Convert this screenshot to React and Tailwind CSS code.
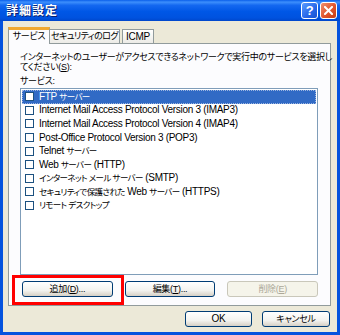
import React from "react";

const jp = { fontFamily: '"Liberation Sans", "Noto Sans CJK JP", sans-serif', fontFeatureSettings: '"palt"' };

const items = [
  "FTP サーバー",
  "Internet Mail Access Protocol Version 3 (IMAP3)",
  "Internet Mail Access Protocol Version 4 (IMAP4)",
  "Post-Office Protocol Version 3 (POP3)",
  "Telnet サーバー",
  "Web サーバー (HTTP)",
  "インターネット メール サーバー (SMTP)",
  "セキュリティで保護された Web サーバー (HTTPS)",
  "リモート デスクトップ",
];

function Mixed({ text }) {
  return text
    .split(/([\x20-\x7E]+)/)
    .map((s, i) =>
      /[\x21-\x7E]/.test(s) ? (
        <span key={i} className="text-[10px] tracking-[-0.3px]">{s}</span>
      ) : (
        <span key={i} className="text-[8.5px] tracking-[-0.6px]">{s}</span>
      )
    );
}

function Btn({ children, disabled, className = "" }) {
  return (
    <div
      className={
        "flex items-center justify-center h-[16px] rounded-[3px] border text-[9px] leading-none whitespace-nowrap " +
        (disabled
          ? "border-[#C9C7BA] text-[#ACA899] bg-[#F5F4EA] "
          : "border-[#003C74] text-black bg-[linear-gradient(to_bottom,#FFFFFF,#F3F3EF_60%,#D6D0C5)] ") +
        className
      }
    >
      {children}
    </div>
  );
}

export default function App() {
  return (
    <div className="w-[340px] h-[335px] bg-[#0553DE] flex flex-col overflow-hidden tracking-[-0.3px]" style={jp}>
      {/* title bar */}
      <div className="h-[21px] shrink-0 flex items-center pl-[6px] pr-[3px] bg-[linear-gradient(to_bottom,#0A5FEA_0%,#3D8FFC_10%,#1468F0_25%,#0057E6_55%,#0052DF_85%,#0047CB_100%)]">
        <span className="text-white font-bold text-[12px] tracking-[1px] [text-shadow:1px_1px_0_#0A1E6E]">詳細設定</span>
        <div className="ml-auto flex gap-[2px] items-center">
          <div className="w-[17px] h-[17px] rounded-[3px] border border-white bg-[linear-gradient(135deg,#5A9BFF,#2667E8_60%,#1B52D0)] flex items-center justify-center text-white font-bold text-[13px] leading-none" style={{ fontFamily: '"Liberation Sans", sans-serif' }}>?</div>
          <div className="w-[17px] h-[17px] rounded-[3px] border border-white bg-[linear-gradient(135deg,#F09070,#E0552D_55%,#C43D15)] flex items-center justify-center">
            <svg width="9" height="9" viewBox="0 0 9 9"><path d="M1 1 L8 8 M8 1 L1 8" stroke="white" strokeWidth="2" strokeLinecap="square" /></svg>
          </div>
        </div>
      </div>
      {/* body */}
      <div className="flex-1 mx-[3px] mb-[3px] bg-[#ECE9D8] flex flex-col px-[5px] pt-[5px] relative">
        {/* tabs */}
        <div className="h-[17px] flex items-end text-[9px] leading-none whitespace-nowrap">
          <div className="relative h-[17px] w-[42px] bg-[#FCFCFE] border-x border-[#919B9C] border-t-[3px] border-t-[#F0A830] flex items-center justify-center z-10 -mb-px pb-[1px]">
            サービス
          </div>
          <div className="h-[14px] w-[70px] border-t border-r border-[#919B9C] bg-[linear-gradient(to_bottom,#FFFFFF,#ECEBE6)] flex items-center justify-center tracking-[-0.6px]">
            セキュリティのログ
          </div>
          <div className="ml-[2px] h-[14px] w-[32px] border-t border-x border-[#919B9C] bg-[linear-gradient(to_bottom,#FFFFFF,#ECEBE6)] flex items-center justify-center">
            <span className="text-[10px] tracking-[-0.3px]">ICMP</span>
          </div>
        </div>
        {/* panel */}
        <div className="h-[263px] w-[323px] border border-[#919B9C] bg-[#FCFCFE] flex flex-col px-[11px] pt-[8px] text-[9px] whitespace-nowrap">
          <div className="leading-[10px]">
            <div>インターネットのユーザーがアクセスできるネットワークで実行中のサービスを選択し</div>
            <div>てください(<span className="underline">S</span>):</div>
          </div>
          <div className="leading-[10px] mt-[4px]">サービス:</div>
          <div className="mt-[2px] h-[187px] w-[298px] border border-[#7F9DB9] bg-white p-px">
            {items.map((t, i) => (
              <div
                key={i}
                className={
                  "h-[13.6px] flex items-center pl-[3px] leading-none " +
                  (i === 0 ? "bg-[#316AC5] text-white outline outline-1 outline-dotted outline-[#9CB5E0] -outline-offset-1" : "text-black")
                }
              >
                <span className="w-[9px] h-[9px] border border-[#1C5180] bg-white shrink-0 mr-[5px]" />
                <span>
                  <Mixed text={t} />
                </span>
              </div>
            ))}
          </div>
          <div className="mt-[6px] grid grid-cols-3 gap-[12px] w-[296px] ml-[2px]">
            <Btn>追加(<span className="underline">D</span>)...</Btn>
            <Btn>編集(<span className="underline">T</span>)...</Btn>
            <Btn disabled>削除(<span className="underline">E</span>)</Btn>
          </div>
        </div>
        {/* bottom buttons */}
        <div className="mt-[5px] flex justify-end gap-[10px] pr-[2px]">
          <Btn className="w-[67px]"><span className="text-[10px]">OK</span></Btn>
          <Btn className="w-[68px]">キャンセル</Btn>
        </div>
        {/* red annotation box */}
        <div className="absolute left-[9px] top-[254px] w-[112px] h-[30px] border-[3px] border-[#FF0000]" />
      </div>
    </div>
  );
}
